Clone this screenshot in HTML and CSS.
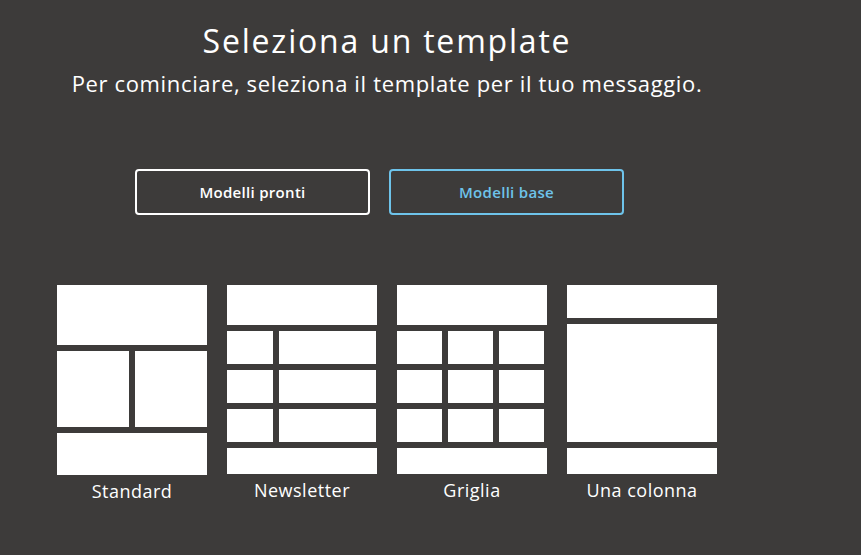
FILE: index.html
```html
<!DOCTYPE html>
<html lang="it">
<head>
<meta charset="utf-8">
<title>Seleziona un template</title>
<link rel="stylesheet" href="styles.css">
</head>
<body>
<main class="page">
  <header class="intro">
    <h1 class="title">Seleziona un template</h1>
    <p class="subtitle">Per cominciare, seleziona il template per il tuo messaggio.</p>
  </header>

  <nav class="tabs">
    <button class="tab">Modelli pronti</button>
    <button class="tab tab-active">Modelli base</button>
  </nav>

  <section class="templates">
    <div class="tpl">
      <div class="thumb">
        <div class="blk h60"></div>
        <div class="row h76"><div class="blk grow"></div><div class="blk grow"></div></div>
        <div class="blk h42"></div>
      </div>
      <div class="label">Standard</div>
    </div>

    <div class="tpl">
      <div class="thumb">
        <div class="blk h40"></div>
        <div class="row h33 nl"><div class="blk w46"></div><div class="blk w97"></div></div>
        <div class="row h33 nl"><div class="blk w46"></div><div class="blk w97"></div></div>
        <div class="row h33 nl"><div class="blk w46"></div><div class="blk w97"></div></div>
        <div class="blk h26"></div>
      </div>
      <div class="label">Newsletter</div>
    </div>

    <div class="tpl">
      <div class="thumb">
        <div class="blk h40"></div>
        <div class="row h33"><div class="blk w45"></div><div class="blk w45"></div><div class="blk w45"></div></div>
        <div class="row h33"><div class="blk w45"></div><div class="blk w45"></div><div class="blk w45"></div></div>
        <div class="row h33"><div class="blk w45"></div><div class="blk w45"></div><div class="blk w45"></div></div>
        <div class="blk h26"></div>
      </div>
      <div class="label">Griglia</div>
    </div>

    <div class="tpl">
      <div class="thumb">
        <div class="blk h33"></div>
        <div class="blk h118"></div>
        <div class="blk h26"></div>
      </div>
      <div class="label">Una colonna</div>
    </div>
  </section>
</main>
</body>
</html>
```

FILE: styles.css
```css
html, body {
  margin: 0;
  padding: 0;
  background: #3d3b3a;
  color: #ffffff;
  font-family: "Open Sans", Lato, "DejaVu Sans", sans-serif;
  height: 100%;
}

.page {
  width: 774px;
  padding-top: 21px;
}

.intro {
  text-align: center;
}

.title {
  margin: 0;
  font-size: 32px;
  line-height: 40px;
  font-weight: 400;
  letter-spacing: 1.8px;
}

.subtitle {
  margin: 7px 0 0 0;
  font-size: 22px;
  line-height: 30px;
  font-weight: 400;
  letter-spacing: 0.65px;
}

.tabs {
  display: flex;
  justify-content: center;
  gap: 19px;
  padding-right: 15px;
  margin-top: 71px;
}

.tab {
  width: 235px;
  height: 46px;
  background: transparent;
  border: 2px solid #ffffff;
  border-radius: 4px;
  color: #ffffff;
  font-family: "Open Sans", Lato, sans-serif;
  font-weight: 600;
  font-size: 15px;
  letter-spacing: 0.3px;
  padding: 0;
}

.tab-active {
  border-color: #6ec3ea;
  color: #6ec3ea;
}

.templates {
  display: flex;
  gap: 20px;
  padding-left: 57px;
  margin-top: 70px;
}

.tpl {
  width: 150px;
  display: flex;
  flex-direction: column;
  align-items: center;
}

.thumb {
  width: 150px;
  display: flex;
  flex-direction: column;
  gap: 6px;
}

.row {
  display: flex;
  gap: 6px;
}

.blk {
  background: #ffffff;
}

.grow { flex: 1; }
.w45 { width: 45px; }
.w46 { width: 46px; }
.w97 { width: 97px; }

.h26 { height: 26px; }
.h33 { height: 33px; }
.h40 { height: 40px; }
.h42 { height: 42px; }
.h60 { height: 60px; }
.h76 { height: 76px; }
.h118 { height: 118px; }

.label {
  margin-top: 3px;
  font-size: 18px;
  line-height: 26px;
  font-weight: 400;
  letter-spacing: 0.5px;
}
```
